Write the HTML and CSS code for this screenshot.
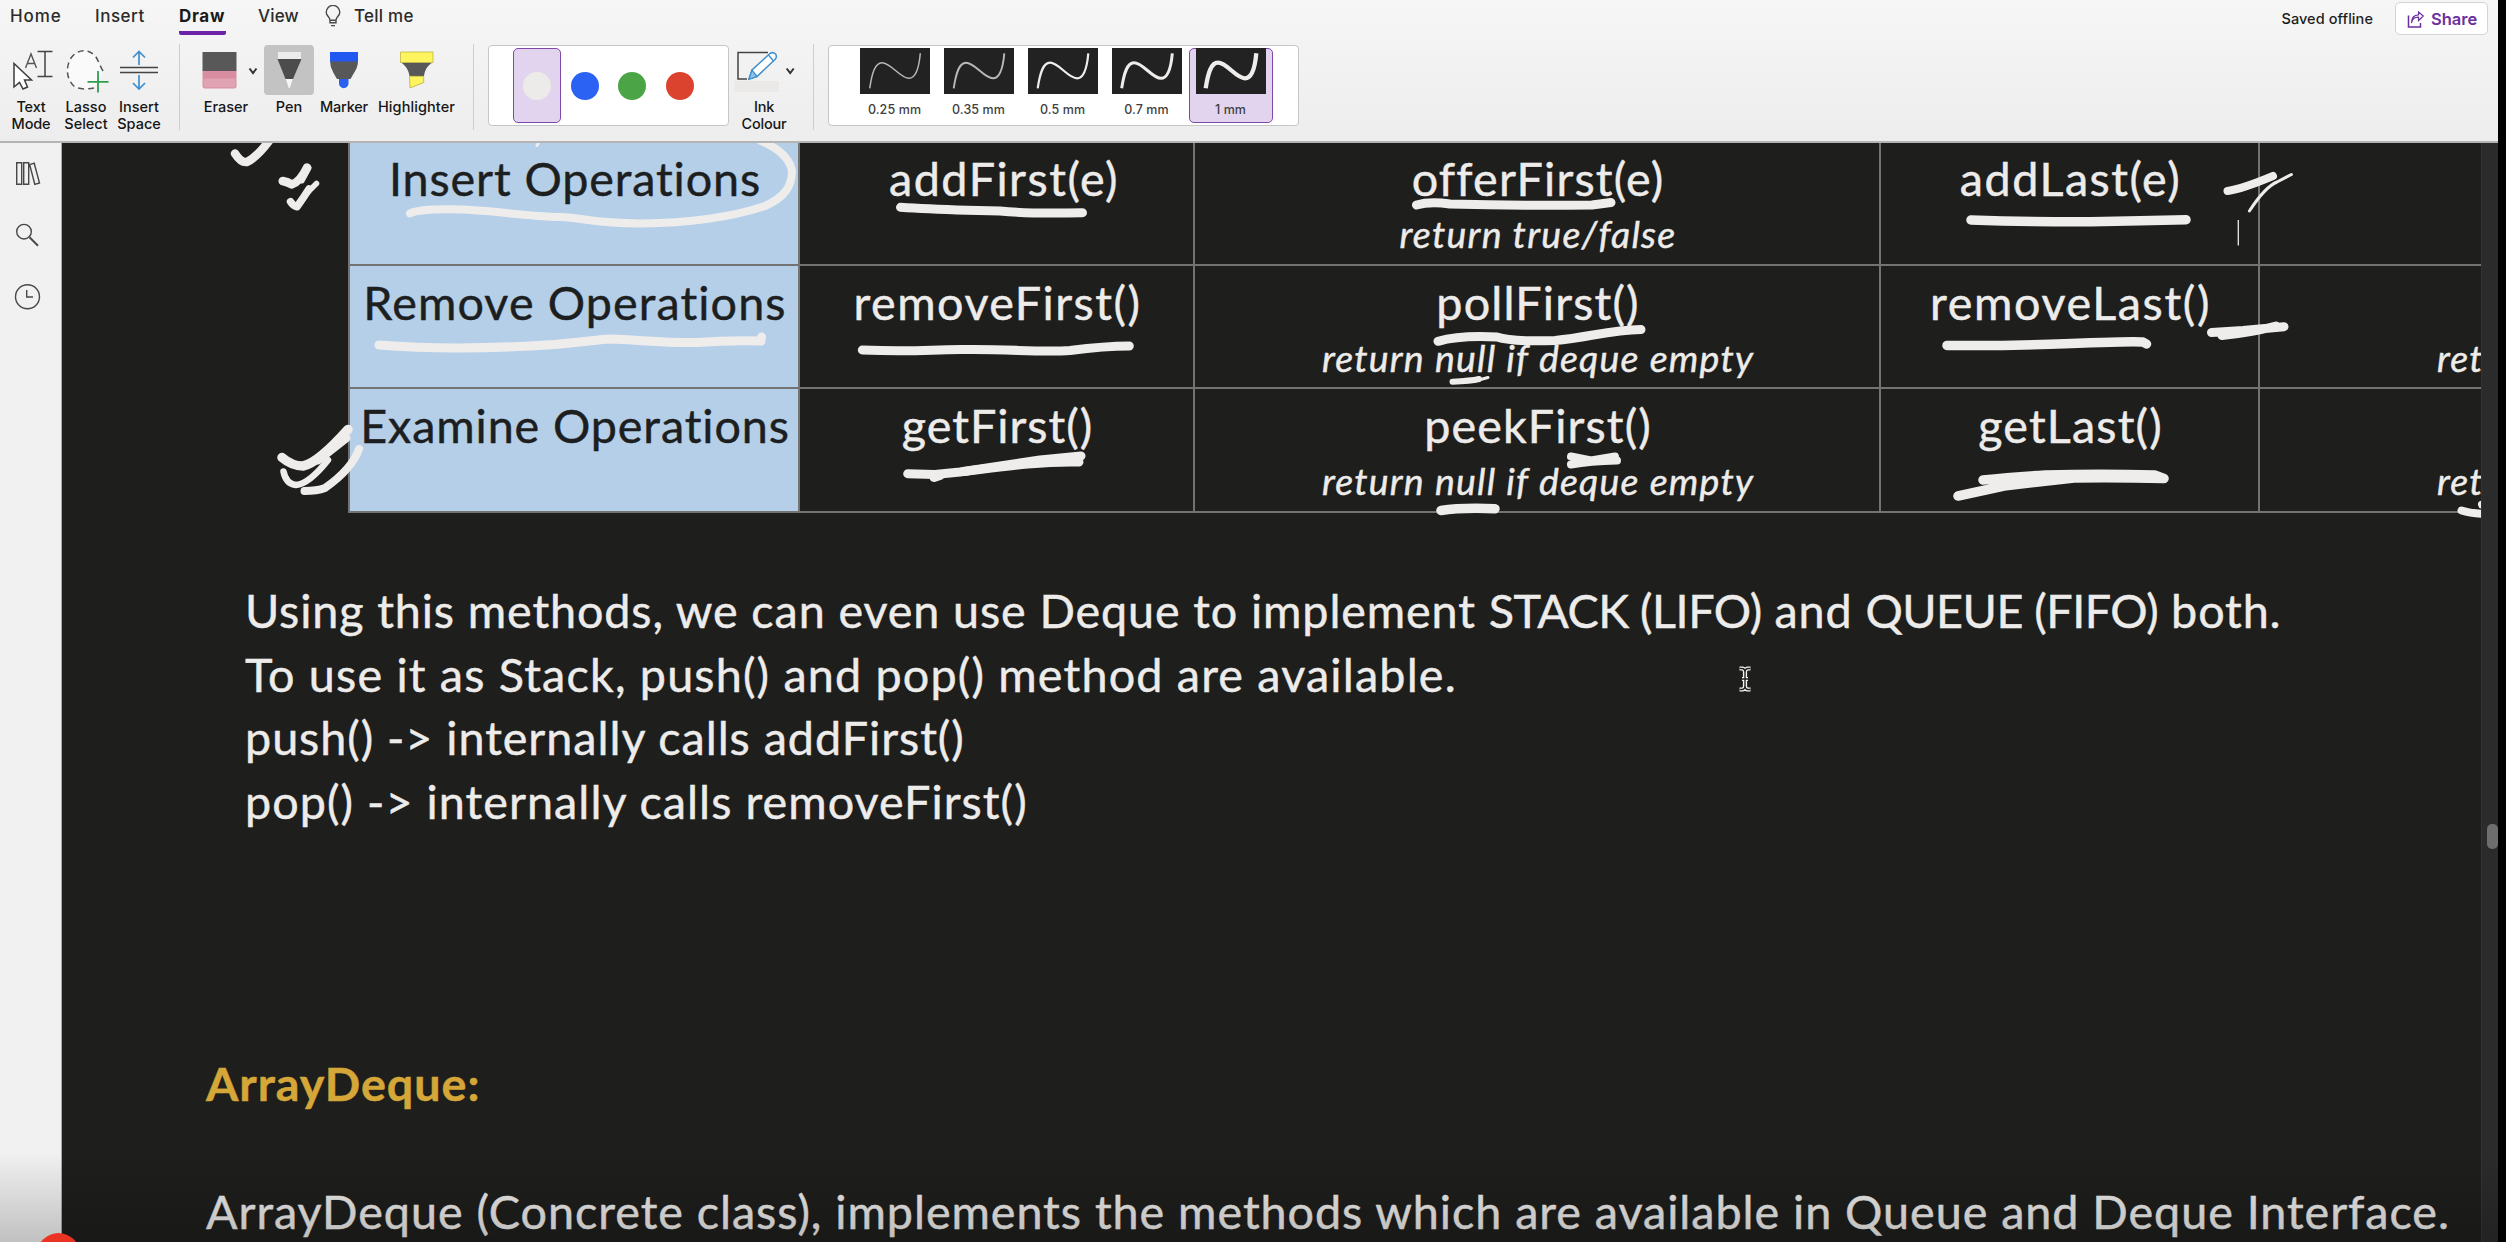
FILE: index.html
```html
<!DOCTYPE html>
<html lang="en">
<head>
<meta charset="utf-8">
<title>Notebook - Deque</title>
<link rel="stylesheet" href="styles.css">
</head>
<body>
<div class="app">
  <header class="ribbon">
    <div class="tabs">
      <nav class="tab-list">
        <a class="tab tab-home">Home</a>
        <a class="tab tab-insert">Insert</a>
        <a class="tab tab-draw">Draw</a>
        <a class="tab tab-view">View</a>
        <a class="tab tab-tell">
          <svg class="bulb" width="16" height="22" viewBox="0 0 16 22" fill="none" stroke="#4a4a4a" stroke-width="1.4"><path d="M5 15.2C5 12 1.2 11 1.2 7.2a6.8 6.8 0 0 1 13.6 0C14.800 11 11 12 11 15.200V17.800H5ZM5 15.200H11M6 20.600H10"/></svg>
          <span>Tell me</span>
        </a>
      </nav>
      <div class="tab-actions">
        <span class="saved">Saved offline</span>
        <button class="share">
          <svg width="18" height="18" viewBox="0 0 18 18" fill="none" stroke="#6b2fa0" stroke-width="1.5"><path d="M1.500 4.500V16H13.500V12"/><path d="M4.500 12C5 8 7.500 6.200 11.500 6.200V9.500L16.300 5L11.500 1V3.800C7 4 4.500 7 4.500 12Z" stroke-width="1.200"/></svg>
          <span>Share</span>
        </button>
      </div>
    </div>
    <div class="tools">
      <div class="tool tool-text">
        <svg width="62" height="50" viewBox="0 45 62 50" fill="none"><path d="M14 63.500V87L19.500 82.500L23 89L27.500 87L24.500 80H31.500Z" fill="#fff" stroke="#3c3c3c" stroke-width="1.500"/><path d="M25.500 68L31 54L36.500 68M27.300 63.500H34.700" stroke="#555" stroke-width="1.400"/><path d="M37.500 51.500H52.500M45 51.500V76.500M37.500 76.500H52.500" stroke="#444" stroke-width="1.500"/></svg>
        <span>Text</span><span>Mode</span>
      </div>
      <div class="tool tool-lasso">
        <svg width="48" height="50" viewBox="62 45 48 50" fill="none"><path d="M103 71C100 66 98 60 96 57C90 49 78 48 71 58C65 68 67 80 74 86C79 90 88 89 94 88" fill="#fafafa" stroke="#555" stroke-width="1.500" stroke-dasharray="6 4"/><path d="M98 71V92.500M87.500 81.800H108.500" stroke="#2f9e4f" stroke-width="1.800"/></svg>
        <span>Lasso</span><span>Select</span>
      </div>
      <div class="tool tool-space">
        <svg width="58" height="50" viewBox="110 45 58 50" fill="none"><path d="M120 67.500H158M120 72.500H158" stroke="#444" stroke-width="1.700"/><path d="M139 65V51.500M133 57.500L139 51.500L145 57.500M139 75V89M133 83L139 89L145 83" stroke="#3f8fcf" stroke-width="1.700"/></svg>
        <span>Insert</span><span>Space</span>
      </div>
      <div class="rule"></div>
      <div class="tool tool-eraser">
        <svg width="72" height="50" viewBox="190 45 72 50"><path d="M202.500 52H236.500V71H202.500Z" fill="#585858"/><path d="M202.500 71H236.500V86Q236.500 88.500 234 88.500H205Q202.500 88.500 202.500 86Z" fill="#d88da0"/><path d="M203.500 78.500H235.500V86Q235.500 87.500 234 87.500H205Q203.500 87.500 203.500 86Z" fill="#dfa3b3"/><path d="M249.500 68.500L253 73L256.500 68.500" fill="none" stroke="#333" stroke-width="2"/></svg>
        <span>Eraser</span>
      </div>
      <div class="tool tool-pen">
        <svg class="pressed" width="50" height="50" viewBox="264 45 50 50"><path d="M278 52H301V59H278Z" fill="#ececec"/><path d="M277.500 59H301.500L293 79H285.500Z" fill="#4c4c4c"/><path d="M285.700 79H292.700L289.800 88H288.800Z" fill="#f5f5f5"/></svg>
        <span>Pen</span>
      </div>
      <div class="tool tool-marker">
        <svg width="60" height="50" viewBox="314 45 60 50"><path d="M339 77H348.500V83.500A4.700 4.700 0 0 1 339 83.500Z" fill="#2a60ee"/><path d="M330 61H358Q358 67 354 73L350.500 79H337L333.500 73Q330 67 330 61Z" fill="#585858"/><path d="M330 52H358V61.500H330Z" fill="#2358f0"/></svg>
        <span>Marker</span>
      </div>
      <div class="tool tool-highlighter">
        <svg width="85" height="50" viewBox="374 45 85 50"><path d="M401 62.500H432.500C427 66 425 70 424 76H409.500C408.500 70 406 66 401 62.500Z" fill="#585858"/><path d="M400.500 52H433V62.500H400.500Z" fill="#fdf45e" stroke="#b9b03c" stroke-width=".7"/><path d="M409.500 76.300H423.700V82.500L410 88Z" fill="#fdf45e" stroke="#b9b03c" stroke-width=".8"/></svg>
        <span>Highlighter</span>
      </div>
      <div class="rule rule-2"></div>
      <div class="swatches">
        <div class="swatch active"><i class="dot dot-white"></i></div>
        <div class="swatch"><i class="dot dot-blue"></i></div>
        <div class="swatch"><i class="dot dot-green"></i></div>
        <div class="swatch"><i class="dot dot-red"></i></div>
      </div>
      <div class="tool tool-ink">
        <svg width="72" height="50" viewBox="729 45 72 50" fill="none"><path d="M734.500 81H779V92H734.500Z" fill="#ebe9e8"/><path d="M768 52.500H738V79H747" stroke="#444" stroke-width="1.500"/><path d="M749 79L752 70L770 53.500Q773 51.500 775.500 54Q777.500 57 775 59.500L757 76.500Z" fill="#fff" stroke="#3f8fcf" stroke-width="1.500"/><path d="M749 79L752 70L757 76.500Z" fill="#8fc3ea" stroke="#3f8fcf" stroke-width="1.300"/><path d="M768.500 55L773.500 61" stroke="#3f8fcf" stroke-width="1.300"/><path d="M786.700 68.500L790.200 73L793.700 68.500" stroke="#333" stroke-width="2"/></svg>
        <span>Ink</span><span>Colour</span>
      </div>
      <div class="rule rule-3"></div>
      <div class="widths">
        <div class="width"><svg width="70" height="46" viewBox="0 0 70 46"><path class="curve fine" stroke-width="1.500" d="M9.700 40.300C12 25 15 14.700 22 14.700C31 14.700 40 30.300 49 30.300C56 30.300 59 20 60.300 5.300"/></svg><span>0.25 mm</span></div>
        <div class="width"><svg width="70" height="46" viewBox="0 0 70 46"><path class="curve fine" stroke-width="1.900" d="M9.700 40.300C12 25 15 14.700 22 14.700C31 14.700 40 30.300 49 30.300C56 30.300 59 20 60.300 5.300"/></svg><span>0.35 mm</span></div>
        <div class="width"><svg width="70" height="46" viewBox="0 0 70 46"><path class="curve" stroke-width="2.200" d="M9.700 40.300C12 25 15 14.700 22 14.700C31 14.700 40 30.300 49 30.300C56 30.300 59 20 60.300 5.300"/></svg><span>0.5 mm</span></div>
        <div class="width"><svg width="70" height="46" viewBox="0 0 70 46"><path class="curve" stroke-width="3" d="M9.700 40.300C12 25 15 14.700 22 14.700C31 14.700 40 30.300 49 30.300C56 30.300 59 20 60.300 5.300"/></svg><span>0.7 mm</span></div>
        <div class="width active"><svg width="70" height="46" viewBox="0 0 70 46"><path class="curve" stroke-width="4.300" d="M9.700 40.300C12 25 15 14.700 22 14.700C31 14.700 40 30.300 49 30.300C56 30.300 59 20 60.300 5.300"/></svg><span>1 mm</span></div>
      </div>
    </div>
  </header>

  <div class="workspace">
    <aside class="sidebar">
      <svg class="side-icon" width="60" height="28" viewBox="0 160 60 28"><path d="M16.700 162.700H21.700V184.300H16.700ZM23.700 162.700H28.700V184.300H23.700ZM29.700 164.700L34.200 163.200L39.500 183L34.800 184.300Z"/></svg>
      <svg class="side-icon side-search" width="60" height="28" viewBox="0 222 60 28"><circle cx="24" cy="231.700" r="7.300"/><path stroke-width="2" d="M29.500 237.200L38 245.700"/></svg>
      <svg class="side-icon side-recent" width="60" height="28" viewBox="0 283 60 28"><circle cx="27.500" cy="296.700" r="12"/><path d="M26.700 290V297H33"/></svg>
    </aside>

    <main class="page">
      <div class="table">
        <div class="row">
          <div class="cell head"><p class="t t1">Insert Operations</p></div>
          <div class="cell nudge"><p class="t t4">addFirst(e)</p></div>
          <div class="cell"><p class="t t7">offerFirst(e)</p><p class="note n1">return true/false</p></div>
          <div class="cell"><p class="t t12">addLast(e)</p></div>
          <div class="cell"></div>
        </div>
        <div class="row">
          <div class="cell head"><p class="t t2">Remove Operations</p></div>
          <div class="cell"><p class="t t5">removeFirst()</p></div>
          <div class="cell"><p class="t t9">pollFirst()</p><p class="note">return null if deque empty</p></div>
          <div class="cell"><p class="t t13">removeLast()</p></div>
          <div class="cell last"><p class="note">return null if deque empty</p></div>
        </div>
        <div class="row">
          <div class="cell head"><p class="t t3">Examine Operations</p></div>
          <div class="cell"><p class="t t6">getFirst()</p></div>
          <div class="cell"><p class="t t11">peekFirst()</p><p class="note">return null if deque empty</p></div>
          <div class="cell"><p class="t t14">getLast()</p></div>
          <div class="cell last"><p class="note">return null if deque empty</p></div>
        </div>
      </div>

      <div class="notes">
        <p class="b1">Using this methods, we can even use Deque to implement <span class="caps">STACK (LIFO)</span> and <span class="caps">QUEUE (FIFO)</span> both.</p>
        <p class="b2">To use it as Stack, push() and pop() method are available.</p>
        <p class="b3">push() -&gt; internally calls addFirst()</p>
        <p class="b4">pop() -&gt; internally calls removeFirst()</p>
      </div>
      <h2 class="title">ArrayDeque:</h2>
      <p class="para">ArrayDeque (Concrete class), implements the methods which are available in Queue and Deque Interface.</p>

      <svg class="ink" viewBox="62 143 2419 1099">
        <!-- tick marks beside the table -->
        <path stroke-width="8.500" d="M235 153.500Q241 163 247 162Q257 157 269 141"/>
        <path stroke-width="8.500" d="M282.700 181Q288 182 291.700 184.500Q300 182 307 167.500"/>
        <path stroke-width="5" d="M302 181L309 168"/>
        <path stroke-width="7.500" d="M290.500 201.700Q293 206 297 206.700Q304 197 309 189"/><path stroke-width="5.500" d="M305 195L316.500 183.500"/>
        <path stroke-width="9.500" d="M282 457.500Q292 466 303 466Q318 463 348 429.500"/><path stroke-width="9" d="M318 460Q332 449 346 438"/>
        <path stroke-width="6.500" d="M283.500 471.500Q286 484 296 485Q309 484 328 460"/>
        <path stroke-width="8" d="M304.500 491Q317 491 325 488Q352 469 359 449"/>
        <!-- first column -->
        <path stroke-width="8" d="M410 213.300Q420 209 450 209.300C485 209 520 216 560 217C585 218 592 223 640 223.500C690 223 735 216 765 206C785 197 792 186 792 171C790 160 780 149 761 141"/>
        <path stroke-width="3" d="M537 145.500L539 142"/>
        <path stroke-width="9" d="M379 345C430 349 490 348 530 346C575 344 590 340 610 339C640 340 665 343 697 342.500Q730 340 761 341L761.500 337"/>
        <!-- second column -->
        <path stroke-width="9" d="M900.500 207.300Q925 209 967 210.300L1000 211Q1030 214 1082.500 212.700"/>
        <path stroke-width="9" d="M862.300 350C920 352.500 930 349 967 349.500C1010 349 1040 352.500 1070 350.500Q1105 346 1129.300 346"/>
        <path stroke-width="9" d="M907.700 473.700L935 474.500L960 472L1040 460L1081 456"/><path stroke-width="9" d="M934 477.500L940 475.500M964 471.500C1000 467 1040 461 1079 462"/>
        <!-- third column -->
        <path stroke-width="9" d="M1416.500 205Q1430 201 1450 204Q1520 206 1592 205L1611 202.500"/>
        <path stroke-width="9" d="M1438 341.300Q1460 335 1497 337Q1512 342 1555 340.500C1590 337 1610 330 1641 329.500"/>
        <path stroke-width="6" d="M1452.500 381.700Q1471 381 1479 379"/><path stroke-width="3" d="M1475 381L1488 377.500"/>
        <path stroke-width="8" d="M1571 456.500L1591 460.500L1615 456.500M1571 464.500Q1590 461 1617 460.500"/>
        <path stroke-width="9.500" d="M1441 510.500Q1460 507.500 1495 508.700"/>
        <!-- fourth column -->
        <path stroke-width="9.500" d="M1971 220Q2030 222 2091 221.700L2140 220.700L2186 219.700"/>
        <path stroke-width="8" d="M2227.500 191Q2242 189 2273 176"/><path stroke-width="3" d="M2249.400 211Q2265 187 2277 182L2291.400 174.500"/><path stroke-width="1.300" stroke-linecap="butt" d="M2238.300 220V245.500"/>
        <path stroke-width="9.500" d="M1947 345.500Q2000 346 2049.500 344.300Q2130 341 2143 342L2146.500 344"/>
        <path stroke-width="9" d="M2211.500 332.500L2243 330.500L2284 326.700M2222 335.500Q2250 333 2276 326"/>
        <path stroke-width="9.500" d="M1983 480Q2010 477 2045.500 475Q2100 473.500 2154.600 475L2164 478.500M1958 496L2004 486L2074 478Q2120 477.500 2164 478.500"/>
        <path stroke-width="8" d="M2461.500 510.500Q2471 513.500 2485 514M2482 504.500L2484 504"/>
      </svg>
      <svg class="ibeam" width="14" height="26" viewBox="0 0 14 26" fill="none"><path stroke="#f4f4f4" stroke-width="4.200" d="M1.500 2.500H4.500Q7 3 7 6V20Q7 23 4.500 23.500H1.500M12.500 2.500H9.500Q7 3 7 6M12.500 23.500H9.500Q7 23 7 20M4 13H10"/><path stroke="#222" stroke-width="1.400" d="M1.500 2.500H4.500Q7 3 7 6V20Q7 23 4.500 23.500H1.500M12.500 2.500H9.500Q7 3 7 6M12.500 23.500H9.500Q7 23 7 20M4 13H10"/></svg>
    </main>

    <div class="scrollbar"><div class="thumb"></div></div>
  </div>
  <div class="shade"></div>
  <div class="playhead"></div>
</div>
</body>
</html>
```
FILE: styles.css
```css
* { box-sizing: border-box; }
body { margin: 0; background: #000; }
p, h2 { margin: 0; }

.app {
  position: relative;
  display: flex;
  flex-direction: column;
  width: 2498px;
  height: 1242px;
  overflow: hidden;
  font-family: Inter, "Liberation Sans", sans-serif;
  color: #1d1d1d;
}

/* Ribbon */
.ribbon {
  flex: none;
  height: 143px;
  border-bottom: 2px solid #b4b4b4;
  background: linear-gradient(#f6f6f6, #ededed);
}
.tabs { display: flex; justify-content: space-between; height: 44px; }
.tab-list { display: flex; padding-left: 10px; }
.tab {
  display: block;
  height: 35px;
  font-size: 17px;
  font-weight: 500;
  line-height: 33px;
  white-space: nowrap;
  color: #2b2b2b;
}
.tab-home { width: 85px; letter-spacing: 0.9px; }
.tab-insert { width: 84px; letter-spacing: 0.52px; }
.tab-draw {
  width: 47px;
  margin-right: 32px;
  border-bottom: 4px solid #6b21a8;
  border-radius: 2px;
  font-weight: 700;
  letter-spacing: 0.7px;
  color: #1a1a1a;
}
.tab-view { width: 67px; letter-spacing: 0.15px; }
.tab-tell { display: flex; gap: 13px; letter-spacing: 0.25px; }
.bulb { margin-top: 5px; }
.tab-actions { display: flex; padding: 2px 10px 0 0; }
.saved { margin-right: 22px; font-size: 14.500px; font-weight: 500; line-height: 34px; letter-spacing: 0.08px; }
.share {
  display: flex;
  gap: 6px;
  width: 93px;
  height: 33px;
  padding: 8px 0 0 11px;
  border: 1.500px solid #d4d4d4;
  border-radius: 5px;
  background: #fff;
  font: 600 16.500px/20px Inter, sans-serif;
  color: #6b2fa0;
}
.share span { margin-top: -2px; }

.tools { display: flex; align-items: flex-start; }
.tool {
  display: flex;
  flex: none;
  flex-direction: column;
  align-items: center;
  padding-top: 1px;
  font-size: 14.500px;
  font-weight: 500;
  line-height: 16.700px;
  color: #161616;
}
.tool svg { flex: none; display: block; margin-bottom: 4px; }
.tool-text { width: 62px; letter-spacing: -0.15px; }
.tool-lasso { width: 48px; }
.tool-space { width: 58px; }
.tool-eraser { width: 72px; margin-left: 10px; }
.tool-pen { width: 50px; margin-left: 2px; }
.tool-marker { width: 60px; letter-spacing: -0.2px; }
.tool-highlighter { width: 85px; letter-spacing: 0.1px; }
.tool-ink { width: 72px; letter-spacing: -0.2px; }
.tool-ink span { margin-right: 2px; }
.pressed { border-radius: 4px; background: #c3c3c3; }
.rule { flex: none; width: 1px; height: 86px; margin-left: 11px; background: #cecece; }
.rule-2 { margin-left: 14px; }
.rule-3 { margin-left: 12px; }

.swatches, .widths {
  display: flex;
  flex: none;
  height: 81px;
  margin-top: 1px;
  border: 1px solid #c6c6c6;
  border-radius: 4px;
  background: #fff;
}
.swatches { width: 241px; margin-left: 14px; padding: 2px 0 0 24px; }
.swatch {
  display: flex;
  align-items: center;
  justify-content: center;
  width: 47.700px;
  height: 75px;
  border: 1.500px solid transparent;
  border-radius: 5px;
}
.swatch.active, .width.active { border-color: #8148a8; background: #e2d4ee; }
.dot { width: 28px; height: 28px; border-radius: 50%; }
.dot-white { background: #edebe9; }
.dot-blue { background: #2b62f3; }
.dot-green { background: #4ba446; }
.dot-red { background: #dc432e; }

.widths { width: 471px; margin-left: 14px; padding: 2px 0 0 24px; }
.width {
  display: flex;
  flex-direction: column;
  align-items: center;
  width: 84px;
  height: 75px;
  border: 1.500px solid transparent;
  border-radius: 5px;
  font-size: 12.500px;
  font-weight: 500;
  line-height: 17px;
  letter-spacing: 0.100px;
  color: #3f3f3f;
}
.width span { margin-right: 1px; }
.width svg { flex: none; margin: -1px 0 7px; background: #222; }
.curve { fill: none; stroke: #efedeb; }
.fine { stroke: #b9b8b7; }

/* Workspace */
.workspace { display: flex; flex: 1; min-height: 0; }
.sidebar {
  display: flex;
  flex: none;
  flex-direction: column;
  width: 62px;
  padding-top: 17px;
  border-right: 1px solid #a9a9a9;
  background: #f1f1f1;
}
.side-icon { flex: none; fill: none; stroke: #484848; stroke-width: 1.400; }
.side-search { margin-top: 34px; }
.side-recent { margin-top: 33px; }

.page {
  position: relative;
  flex: none;
  width: 2419px;
  overflow: hidden;
  background: #1e1e1d;
  color: #edecea;
  font-family: Lato, Carlito, sans-serif;
  font-size: 46.700px;
  -webkit-text-stroke: 0.450px currentColor;
  white-space: nowrap;
}
.table { width: 2800px; margin-left: 286px; border-left: 2px solid #737373; }
.row {
  display: grid;
  grid-template-columns: 450px 395px 686px 379px 788px;
  height: 123px;
}
.row:last-child { height: 123.500px; }
.cell {
  padding-top: 4px;
  padding-left: 2px;
  border-right: 2px solid #737371;
  border-bottom: 2px solid #737371;
  text-align: center;
}
.row:first-child .cell { padding-top: 3px; }
.head { background: #b5cfe9; color: #1c1e20; }
.cell.nudge { padding-left: 15px; }
.t { line-height: 64px; }
.note { font-size: 37.500px; font-style: italic; line-height: 48px; letter-spacing: 1.200px; }
.cell.last { padding-top: 68px; text-align: left; padding-left: 177px; }
.t1 { letter-spacing: 0.870px; }
.t2 { letter-spacing: 1.100px; }
.t3 { letter-spacing: 0.890px; }
.t4, .t5, .t12 { letter-spacing: 1.490px; }
.t6 { letter-spacing: 1.010px; }
.t7, .t9, .t14 { letter-spacing: 1.160px; }
.t11 { letter-spacing: 1.100px; }
.t13 { letter-spacing: 1.640px; }
.n1 { letter-spacing: 1.270px; }

.notes { padding: 66.500px 0 0 183px; line-height: 63.500px; }
.b1 { letter-spacing: 0.880px; }
.caps { letter-spacing: -0.500px; }
.b2 { letter-spacing: 1.180px; }
.b3 { letter-spacing: 0.960px; }
.b4 { letter-spacing: 1.050px; }
.title {
  margin: 217.500px 0 0 144px;
  font-size: 46.700px;
  font-weight: 700;
  line-height: 64px;
  letter-spacing: 0.940px;
  color: #d5a638;
}
.para { margin: 64px 0 0 144px; line-height: 64px; letter-spacing: 0.953px; }

.ink {
  position: absolute;
  left: 0;
  top: 0;
  width: 2419px;
  height: 1099px;
  fill: none;
  stroke: #efedeb;
  stroke-linecap: round;
  stroke-linejoin: round;
}
.ibeam { position: absolute; left: 1676px; top: 523px; }

.scrollbar { flex: none; width: 17px; padding: 681px 0 0 5px; border-left: 1px solid #343434; background: #2b2b2b; }
.thumb { width: 11px; height: 25px; border-radius: 5px; background: #6e6e6e; }

/* Player overlay */
.shade {
  position: absolute;
  inset: auto 0 0 0;
  height: 90px;
  background: linear-gradient(rgba(0, 0, 0, 0), rgba(0, 0, 0, 0.200));
}
.playhead {
  position: absolute;
  left: 37px;
  top: 1233px;
  width: 43px;
  height: 43px;
  border-radius: 50%;
  background: #ea3323;
}
```
